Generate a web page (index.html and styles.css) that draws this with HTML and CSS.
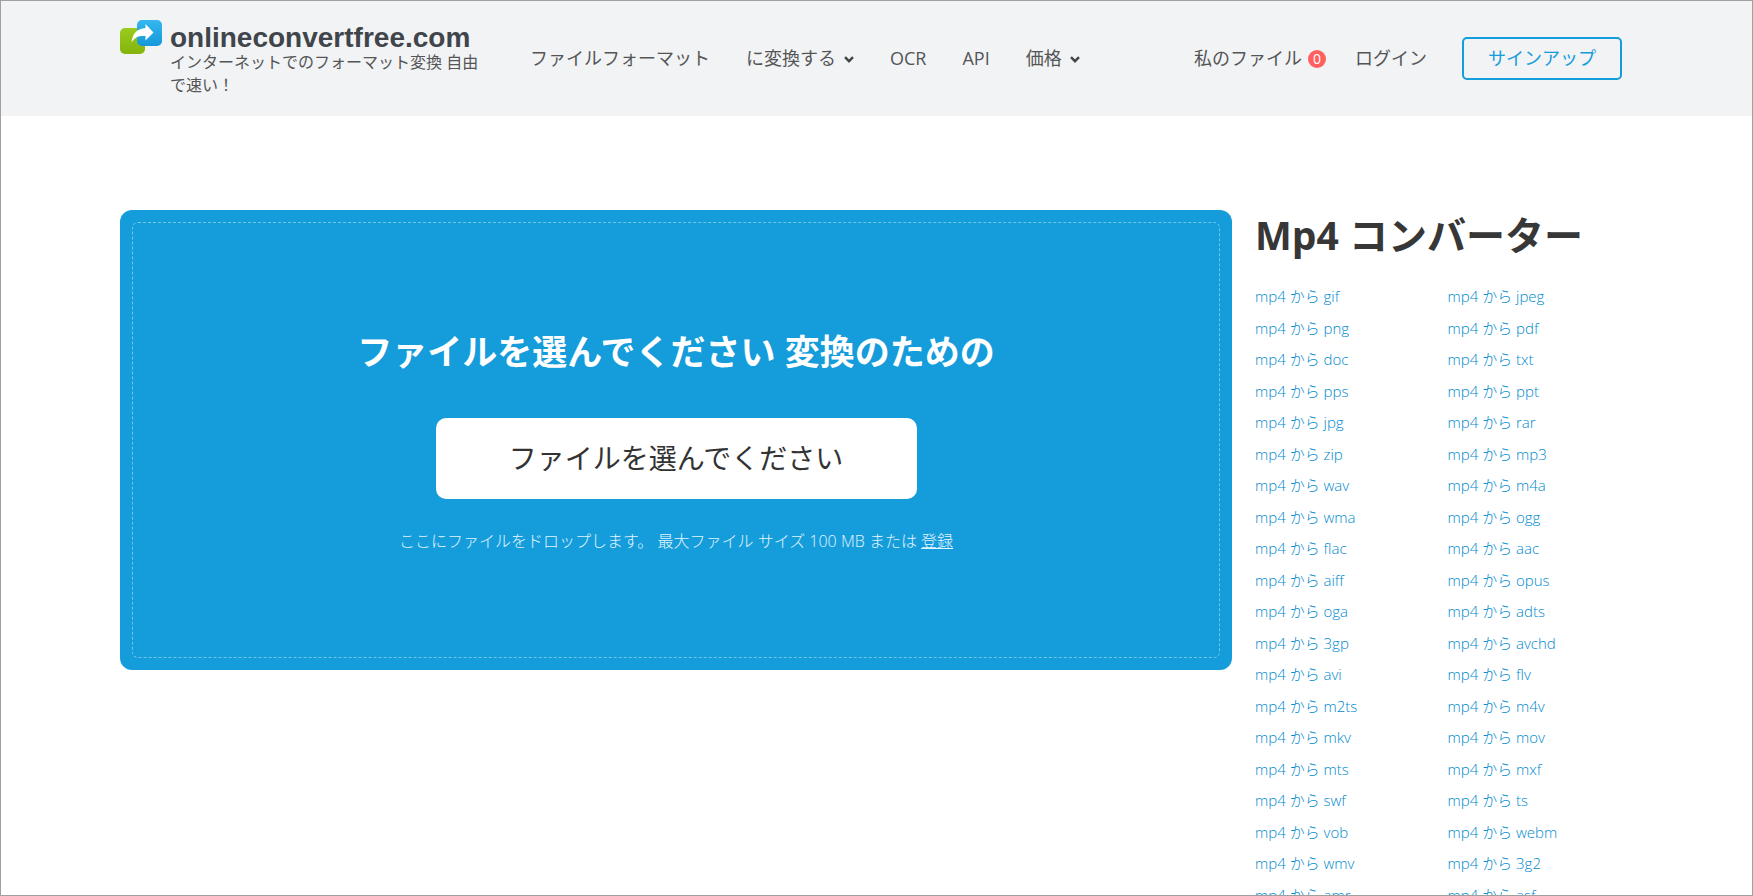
FILE: index.html
```html
<!DOCTYPE html>
<html lang="ja">
<head>
<meta charset="utf-8">
<meta name="viewport" content="width=device-width, initial-scale=1">
<title>Mp4 コンバーター</title>
<link rel="stylesheet" href="styles.css">
</head>
<body>
<header class="header">
  <div class="container header-row">
    <div class="brand">
      <svg class="brand-mark" viewBox="0 0 42 34" aria-hidden="true">
        <defs>
          <linearGradient id="green" x1="0" y1="0" x2="0" y2="1"><stop offset="0" stop-color="#9bcb1d"/><stop offset="1" stop-color="#84b40d"/></linearGradient>
          <linearGradient id="blue" x1="0" y1="0" x2="0" y2="1"><stop offset="0" stop-color="#36b7ef"/><stop offset="1" stop-color="#1498d8"/></linearGradient>
        </defs>
        <rect x="0" y="8" width="25" height="26" rx="5" fill="url(#green)"/>
        <rect x="17" y="0" width="25" height="26" rx="5" fill="url(#blue)"/>
        <path d="M11.500 22.500C12.500 13 17.500 8.500 25.500 8V4L33.500 12.500L25.500 20.500V16C19 15.500 14.500 17 11.500 22.500Z" fill="#fff"/>
      </svg>
      <div class="brand-text">
        <a class="brand-name" href="#">onlineconvertfree.com</a>
        <p class="tagline">インターネットでのフォーマット変換 自由で速い！</p>
      </div>
    </div>
    <nav class="nav">
      <a href="#">ファイルフォーマット</a>
      <a href="#">に変換する<svg class="chevron" viewBox="0 0 10 7" aria-hidden="true"><path d="M1 1.200L5 5.200L9 1.200"/></svg></a>
      <a href="#">OCR</a>
      <a href="#">API</a>
      <a href="#">価格<svg class="chevron" viewBox="0 0 10 7" aria-hidden="true"><path d="M1 1.200L5 5.200L9 1.200"/></svg></a>
    </nav>
    <div class="account">
      <a href="#">私のファイル<span class="badge">0</span></a>
      <a href="#">ログイン</a>
      <a class="signup" href="#">サインアップ</a>
    </div>
  </div>
</header>
<main class="container main">
  <section class="upload">
    <div class="drop">
      <h2 class="drop-title">ファイルを選んでください 変換のための</h2>
      <button class="choose" type="button">ファイルを選んでください</button>
      <p class="hint">ここにファイルをドロップします。 最大ファイル サイズ 100 MB または <a href="#">登録</a></p>
    </div>
  </section>
  <aside class="side">
    <h1 class="side-title">Mp4 コンバーター</h1>
    <ul class="formats">
      <li><a href="#">mp4 から gif</a></li><li><a href="#">mp4 から jpeg</a></li>
      <li><a href="#">mp4 から png</a></li><li><a href="#">mp4 から pdf</a></li>
      <li><a href="#">mp4 から doc</a></li><li><a href="#">mp4 から txt</a></li>
      <li><a href="#">mp4 から pps</a></li><li><a href="#">mp4 から ppt</a></li>
      <li><a href="#">mp4 から jpg</a></li><li><a href="#">mp4 から rar</a></li>
      <li><a href="#">mp4 から zip</a></li><li><a href="#">mp4 から mp3</a></li>
      <li><a href="#">mp4 から wav</a></li><li><a href="#">mp4 から m4a</a></li>
      <li><a href="#">mp4 から wma</a></li><li><a href="#">mp4 から ogg</a></li>
      <li><a href="#">mp4 から flac</a></li><li><a href="#">mp4 から aac</a></li>
      <li><a href="#">mp4 から aiff</a></li><li><a href="#">mp4 から opus</a></li>
      <li><a href="#">mp4 から oga</a></li><li><a href="#">mp4 から adts</a></li>
      <li><a href="#">mp4 から 3gp</a></li><li><a href="#">mp4 から avchd</a></li>
      <li><a href="#">mp4 から avi</a></li><li><a href="#">mp4 から flv</a></li>
      <li><a href="#">mp4 から m2ts</a></li><li><a href="#">mp4 から m4v</a></li>
      <li><a href="#">mp4 から mkv</a></li><li><a href="#">mp4 から mov</a></li>
      <li><a href="#">mp4 から mts</a></li><li><a href="#">mp4 から mxf</a></li>
      <li><a href="#">mp4 から swf</a></li><li><a href="#">mp4 から ts</a></li>
      <li><a href="#">mp4 から vob</a></li><li><a href="#">mp4 から webm</a></li>
      <li><a href="#">mp4 から wmv</a></li><li><a href="#">mp4 から 3g2</a></li>
      <li><a href="#">mp4 から amr</a></li><li><a href="#">mp4 から asf</a></li>
    </ul>
  </aside>
</main>
</body>
</html>
```
FILE: styles.css
```css
* { box-sizing: border-box; }
body {
  margin: 0;
  height: 100vh;
  overflow: hidden;
  border: 1px solid #a0a0a0;
  background: #fff;
  color: #555;
  font-family: "Open Sans", "Noto Sans CJK JP", sans-serif;
  font-size: 16px;
}
a { color: inherit; text-decoration: none; }
h1, h2, p, ul { margin: 0; padding: 0; }
.container { max-width: 1513px; margin: 0 auto; }

.header { background: #f1f3f5; }
.header-row {
  display: flex;
  align-items: flex-start;
  min-height: 115px;
  padding: 19px 11px 0 0;
}
.brand { display: flex; gap: 8px; width: 366px; flex: none; }
.brand-mark { width: 42px; height: 34px; flex: none; }
.brand-text { padding-top: 4px; }
.brand-name {
  display: block;
  color: #40454b;
  font: bold 28px/27px "Liberation Sans", sans-serif;
}
.tagline { width: 315px; line-height: 23px; }
.nav, .account {
  display: flex;
  align-items: center;
  height: 43px;
  margin-top: 17px;
  font-size: 18px;
  white-space: nowrap;
}
.nav { margin-left: 44px; gap: 36px; }
.nav a, .account a { display: flex; align-items: center; line-height: 24px; padding-bottom: 2px; }
.chevron {
  width: 10px;
  height: 7px;
  margin: 4px 0 0 8px;
  fill: none;
  stroke: #444;
  stroke-width: 2.4;
}
.account { margin-left: auto; gap: 29px; }
.badge {
  width: 18px;
  height: 18px;
  margin: 2px 0 0 6px;
  border-radius: 50%;
  background: #ff5f5f;
  color: #fff;
  font-size: 14px;
  line-height: 18px;
  text-align: center;
}
.account .signup {
  justify-content: center;
  width: 160px;
  height: 43px;
  margin-left: 6px;
  border: 2px solid #159cda;
  border-radius: 5px;
  color: #159cda;
}

.main { display: flex; gap: 23px; padding-top: 94px; align-items: flex-start; }
.upload {
  flex: 1;
  padding: 12px;
  border-radius: 12px;
  background: #159cda;
  color: #fff;
}
.drop {
  display: flex;
  flex-direction: column;
  align-items: center;
  padding: 103px 16px;
  border: 1px dashed #73c4e9;
  border-radius: 6px;
}
.drop-title { font-size: 35px; line-height: 51px; }
.choose {
  width: 481px;
  max-width: 100%;
  height: 81px;
  margin: 41px 0 29px;
  padding-bottom: 4px;
  border: 0;
  border-radius: 10px;
  background: #fff;
  color: #333;
  font-family: inherit;
  font-size: 28px;
}
.hint { color: #e0f5ff; font-weight: 300; line-height: 26px; }
.hint a { text-decoration: underline; }

.side { width: 378px; flex: none; }
.side-title { color: #373737; font-size: 39px; line-height: 50px; white-space: nowrap; }
.formats {
  display: grid;
  grid-template-columns: 1fr 1fr;
  column-gap: 7px;
  padding-top: 21px;
  list-style: none;
  font-size: 15px;
  font-weight: 300;
  line-height: 2.1;
  color: #008ace;
}
```
